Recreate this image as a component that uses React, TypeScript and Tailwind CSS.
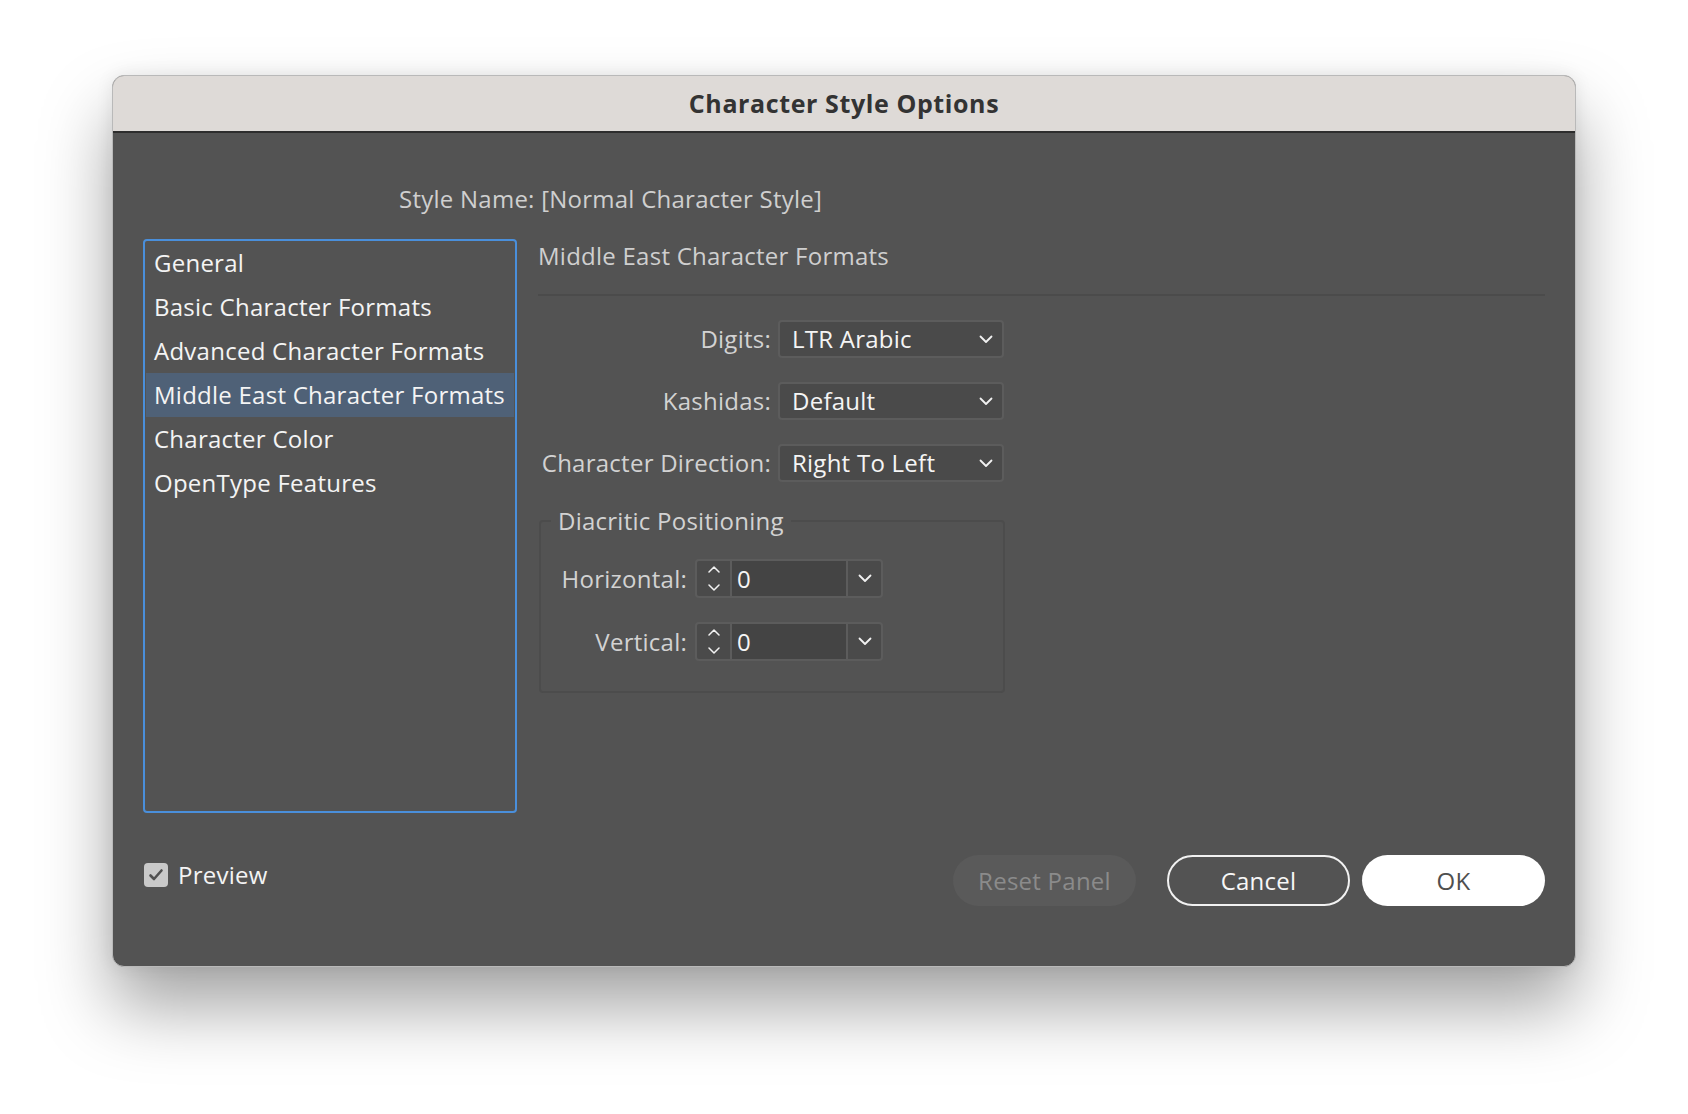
import React from "react";

const categories = [
  "General",
  "Basic Character Formats",
  "Advanced Character Formats",
  "Middle East Character Formats",
  "Character Color",
  "OpenType Features",
];

function ChevronDown({ className = "" }: { className?: string }) {
  return (
    <svg className={className} width="14" height="9" viewBox="0 0 14 9" fill="none">
      <polyline points="1.5,1.5 7,7 12.5,1.5" stroke="#f2f2f2" strokeWidth="1.8" strokeLinecap="round" strokeLinejoin="round" />
    </svg>
  );
}

function SmallChevron({ up }: { up?: boolean }) {
  return (
    <svg width="12" height="7" viewBox="0 0 12 7" fill="none">
      <polyline
        points={up ? "1,6 6,1 11,6" : "1,1 6,6 11,1"}
        stroke="#f2f2f2"
        strokeWidth="1.5"
        strokeLinecap="round"
        strokeLinejoin="round"
      />
    </svg>
  );
}

function SelectRow({ label, value }: { label: string; value: string }) {
  return (
    <div className="flex items-center h-[38px]">
      <span className="w-[234px] text-right text-[#d2d2d2] pr-[1px] whitespace-nowrap">{label}</span>
      <div className="ml-[6px] w-[226px] h-[38px] flex items-center justify-between rounded-[4px] border-2 border-[#5c5c5c] bg-[#4a4a4a] pl-[12px] pr-[9px]">
        <span className="text-[#f5f5f5]">{value}</span>
        <ChevronDown />
      </div>
    </div>
  );
}

function SpinRow({ label, value }: { label: string; value: string }) {
  return (
    <div className="flex items-center h-[39px]">
      <span className="w-[129px] text-right text-[#d2d2d2] whitespace-nowrap">{label}</span>
      <div className="ml-[8px] h-[39px] flex rounded-[4px] border-2 border-[#5c5c5c] bg-[#4a4a4a] overflow-hidden">
        <div className="w-[33px] flex flex-col items-center justify-center gap-[11px]">
          <SmallChevron up />
          <SmallChevron />
        </div>
        <div className="w-[118px] border-x-2 border-[#5c5c5c] bg-[#444444] flex items-center pl-[5px] text-[#f5f5f5]">
          {value}
        </div>
        <div className="w-[33px] flex items-center justify-center">
          <ChevronDown />
        </div>
      </div>
    </div>
  );
}

export default function App() {
  return (
    <div
      className="min-h-screen bg-white pl-[112px] pt-[75px] text-[24px] tracking-[0.25px]"
      style={{ fontFamily: '"Open Sans", "Noto Sans", sans-serif' }}
    >
      <div className="w-[1464px] rounded-[12px] border border-[#b9b9b9] bg-[#535353] overflow-hidden shadow-[0_40px_70px_rgba(0,0,0,0.36),0_0_18px_rgba(0,0,0,0.08)]">
        {/* Title bar */}
        <div className="h-[57px] bg-[#dedad7] border-b-2 border-[#2d2d2d] flex items-center justify-center">
          <span className="font-bold text-[25px] text-[#333333] tracking-[0.6px]">Character Style Options</span>
        </div>

        <div className="px-[30px] pt-[51px] pb-[60px]">
          <div className="h-[30px] flex items-center pl-[256px] text-[#cfcfcf]">
            Style Name: [Normal Character Style]
          </div>

          <div className="mt-[25px] flex">
            {/* Category list */}
            <div className="w-[374px] h-[574px] rounded-[4px] border-2 border-[#4a8fdb] px-[1px]">
              {categories.map((c, i) => (
                <div
                  key={c}
                  className={`h-[44px] flex items-center pl-[8px] text-[#f4f4f4] whitespace-nowrap ${
                    i === 3 ? "bg-[#4f6177]" : ""
                  }`}
                >
                  {c}
                </div>
              ))}
            </div>

            {/* Panel */}
            <div className="ml-[21px] flex-1">
              <div className="h-[34px] flex items-center text-[#cfcfcf]">Middle East Character Formats</div>
              <div className="mt-[21px] h-[2px] bg-[#4b4b4b]" />

              <div className="mt-[24px] flex flex-col gap-[24px]">
                <SelectRow label="Digits:" value="LTR Arabic" />
                <SelectRow label="Kashidas:" value="Default" />
                <SelectRow label="Character Direction:" value="Right To Left" />
              </div>

              <fieldset className="mt-[24px] ml-[1px] w-[466px] rounded-[4px] border-2 border-[#4c4c4c] pl-[17px] pt-[23px] pb-[30px]">
                <legend className="ml-[-7px] px-[7px] h-[30px] leading-[30px] text-[#d2d2d2]">Diacritic Positioning</legend>
                <div className="flex flex-col gap-[24px]">
                  <SpinRow label="Horizontal:" value="0" />
                  <SpinRow label="Vertical:" value="0" />
                </div>
              </fieldset>
            </div>
          </div>

          {/* Footer */}
          <div className="mt-[42px] h-[51px] flex items-start">
            <div className="h-[40px] flex items-center pl-[1px]">
              <div className="w-[24px] h-[24px] rounded-[4px] bg-[#c9c9c9] flex items-center justify-center">
                <svg width="16" height="14" viewBox="0 0 16 14" fill="none">
                  <polyline points="2.5,7.5 6,11 13.5,2.5" stroke="#505050" strokeWidth="2.6" strokeLinecap="round" strokeLinejoin="round" />
                </svg>
              </div>
              <span className="ml-[10px] text-[#f4f4f4]">Preview</span>
            </div>

            <div className="ml-auto flex items-center">
              <button className="w-[183px] h-[51px] rounded-full bg-[#5a5a5a] text-[#8b8b8b]">Reset Panel</button>
              <button className="ml-[31px] w-[183px] h-[51px] rounded-full border-2 border-[#f2f2f2] text-[#f7f7f7]">
                Cancel
              </button>
              <button className="ml-[12px] w-[183px] h-[51px] rounded-full bg-white text-[#4f4f4f]">OK</button>
            </div>
          </div>
        </div>
      </div>
    </div>
  );
}
